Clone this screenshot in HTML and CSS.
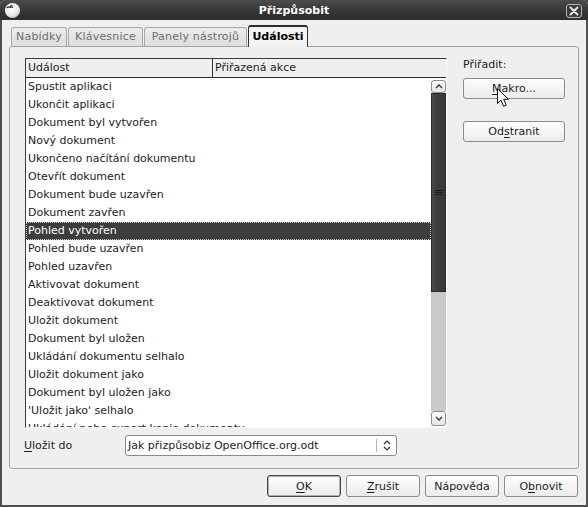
FILE: index.html
```html
<!DOCTYPE html>
<html lang="cs">
<head>
<meta charset="utf-8">
<title>Přizpůsobit</title>
<link rel="stylesheet" href="styles.css">
</head>
<body>
<div class="window">
  <div class="titlebar">
    <span class="app-icon">
      <svg width="17" height="17" viewBox="0 0 17 17">
        <defs>
          <radialGradient id="ball" cx="0.4" cy="0.35" r="0.7">
            <stop offset="0" stop-color="#ffffff"/>
            <stop offset="0.7" stop-color="#e8e8e8"/>
            <stop offset="1" stop-color="#b8b8b8"/>
          </radialGradient>
        </defs>
        <circle cx="8.5" cy="8.5" r="7.6" fill="url(#ball)"/>
        <path d="M3.2 5.6 Q4.6 4.2 6 5.4 Q7.3 4.2 8.6 5.2" fill="none" stroke="#2a2a2a" stroke-width="1.3" stroke-linecap="round"/>
        <path d="M6.5 3.4 Q7.3 2.7 8.1 3.3" fill="none" stroke="#2a2a2a" stroke-width="0.9" stroke-linecap="round"/>
      </svg>
    </span>
    <span class="title">Přizpůsobit</span>
    <span class="close-btn">
      <svg width="16" height="14" viewBox="0 0 16 14">
        <rect x="0.5" y="0.5" width="15" height="13" rx="2.5" fill="#3b3b3b" stroke="#b5b5b5"/>
        <path d="M4.5 3.5 L11.5 10.5 M11.5 3.5 L4.5 10.5" stroke="#e6e6e6" stroke-width="2" stroke-linecap="round"/>
      </svg>
    </span>
  </div>

  <div class="client">
    <div class="tabs">
      <div class="tab tab-menus">Nabídky</div>
      <div class="tab tab-keys">Klávesnice</div>
      <div class="tab tab-toolbars">Panely nástrojů</div>
      <div class="tab tab-active">Události</div>
    </div>

    <div class="panel">
      <div class="panel-main">
        <div class="listbox">
          <div class="list-header">
            <div class="col col-event">Událost</div>
            <div class="col col-action">Přiřazená akce</div>
          </div>
          <div class="list-body">
            <div class="rows">
              <div class="row">Spustit aplikaci</div>
              <div class="row">Ukončit aplikaci</div>
              <div class="row">Dokument byl vytvořen</div>
              <div class="row">Nový dokument</div>
              <div class="row">Ukončeno načítání dokumentu</div>
              <div class="row">Otevřít dokument</div>
              <div class="row">Dokument bude uzavřen</div>
              <div class="row">Dokument zavřen</div>
              <div class="row row-selected">Pohled vytvořen</div>
              <div class="row">Pohled bude uzavřen</div>
              <div class="row">Pohled uzavřen</div>
              <div class="row">Aktivovat dokument</div>
              <div class="row">Deaktivovat dokument</div>
              <div class="row">Uložit dokument</div>
              <div class="row">Dokument byl uložen</div>
              <div class="row">Ukládání dokumentu selhalo</div>
              <div class="row">Uložit dokument jako</div>
              <div class="row">Dokument byl uložen jako</div>
              <div class="row">'Uložit jako' selhalo</div>
              <div class="row">Ukládání nebo export kopie dokumentu</div>
            </div>
            <div class="scrollbar">
              <div class="sb-btn sb-up">
                <svg width="8" height="5" viewBox="0 0 8 5"><path d="M1 4 L4 1 L7 4" fill="none" stroke="#333" stroke-width="1.3"/></svg>
              </div>
              <div class="sb-thumb">
                <svg width="8" height="7" viewBox="0 0 8 7">
                  <path d="M0 1.5 H8 M0 3.5 H8 M0 5.5 H8" stroke="#1e1e1e" stroke-width="1"/>
                </svg>
              </div>
              <div class="sb-track"></div>
              <div class="sb-btn sb-down">
                <svg width="8" height="5" viewBox="0 0 8 5"><path d="M1 1 L4 4 L7 1" fill="none" stroke="#333" stroke-width="1.3"/></svg>
              </div>
            </div>
          </div>
        </div>

        <div class="side">
          <div class="side-label">Přiřadit:</div>
          <div class="btn side-btn"><span><u>M</u>akro...</span></div>
          <div class="btn side-btn side-btn-second"><span>Od<u>s</u>tranit</span></div>
          <svg class="cursor" width="14" height="20" viewBox="0 0 14 20">
            <path d="M0.5 0.5 L0.5 15.5 L4 12.2 L6.6 18.3 L9.2 17.2 L6.7 11.3 L11.4 11.3 Z" fill="#ffffff" stroke="#111" stroke-width="1" stroke-linejoin="round"/>
          </svg>
        </div>
      </div>

      <div class="save-row">
        <div class="save-label"><u>U</u>ložit do</div>
        <div class="combo">
          <div class="combo-text">Jak přizpůsobiz OpenOffice.org.odt</div>
          <div class="combo-sep"></div>
          <div class="combo-arrows">
            <svg width="8" height="13" viewBox="0 0 8 13">
              <path d="M1 5 L4 2 L7 5 M1 8 L4 11 L7 8" fill="none" stroke="#333" stroke-width="1.2"/>
            </svg>
          </div>
        </div>
      </div>
    </div>

    <div class="buttons">
      <div class="btn dlg-btn dlg-default"><span><u>O</u>K</span></div>
      <div class="btn dlg-btn"><span><u>Z</u>rušit</span></div>
      <div class="btn dlg-btn"><span>Nápověda</span></div>
      <div class="btn dlg-btn"><span>O<u>b</u>novit</span></div>
    </div>
  </div>
</div>
</body>
</html>
```

FILE: styles.css
```css
* {
  box-sizing: border-box;
}

html, body {
  margin: 0;
  padding: 0;
}

body {
  width: 588px;
  height: 507px;
  overflow: hidden;
  background: #3a3a3a;
  font-family: "DejaVu Sans", Verdana, sans-serif;
  font-size: 11px;
  color: #1c1c1c;
}

u {
  text-decoration: underline;
  text-underline-offset: 2px;
}

.window {
  width: 588px;
  height: 507px;
  display: flex;
  flex-direction: column;
  background: #efefef;
  border-radius: 5px 5px 0 0;
  overflow: hidden;
}

/* ---------- title bar ---------- */
.titlebar {
  flex: none;
  height: 20px;
  display: grid;
  grid-template-columns: 1fr auto 1fr;
  align-items: center;
  background: linear-gradient(#4c4c4c, #363636 55%, #2d2d2d);
  color: #ffffff;
}

.app-icon {
  justify-self: start;
  display: flex;
  padding-left: 4px;
  padding-top: 1px;
}

.title {
  font-weight: bold;
  font-size: 11px;
  padding-top: 1px;
}

.close-btn {
  justify-self: end;
  display: flex;
  margin-right: 6px;
  margin-top: 1px;
}

/* ---------- client area ---------- */
.client {
  flex: 1;
  display: flex;
  flex-direction: column;
  border-left: 2px solid #505050;
  border-right: 2px solid #505050;
  border-bottom: 2px solid #505050;
  padding: 5px 7px 8px 7px;
}

/* ---------- tabs ---------- */
.tabs {
  flex: none;
  height: 21px;
  display: flex;
  align-items: flex-end;
  gap: 1px;
  margin-left: 2px;
  position: relative;
  z-index: 1;
}

.tab {
  height: 19px;
  line-height: 18px;
  padding: 0;
  text-align: center;
  border: 1px solid #a9a9a9;
  border-bottom: none;
  border-radius: 3px 3px 0 0;
  background: linear-gradient(#ececec, #dedede);
  color: #6e6e6e;
  white-space: nowrap;
  letter-spacing: 0.2px;
}

.tab-menus {
  width: 56px;
}

.tab-keys {
  width: 75px;
}

.tab-toolbars {
  width: 103px;
}

.tab-active {
  width: 60px;
  height: 22px;
  margin-bottom: -1px;
  line-height: 20px;
  border: 1px solid #2e2e2e;
  border-bottom: none;
  border-top-width: 2px;
  background: #f4f4f4;
  color: #000000;
  font-weight: bold;
  letter-spacing: 0;
}

/* ---------- panel ---------- */
.panel {
  flex: none;
  height: 423px;
  display: flex;
  flex-direction: column;
  border: 1px solid #a4a4a4;
  border-radius: 3px;
  background: #efefef;
  padding: 11px 12px 12px 15px;
}

.panel-main {
  flex: none;
  height: 370px;
  display: flex;
  gap: 15px;
}

/* ---------- list box ---------- */
.listbox {
  width: 422px;
  height: 370px;
  display: flex;
  flex-direction: column;
  border: 1px solid;
  border-color: #3a3a3a #fafafa #fafafa #3a3a3a;
}

.list-header {
  flex: none;
  height: 19px;
  display: flex;
  background: #efefef;
  border-bottom: 1px solid #2e2e2e;
}

.col {
  line-height: 18px;
  padding-left: 2px;
  white-space: nowrap;
}

.col-event {
  width: 187px;
  border-right: 1px solid #2e2e2e;
}

.col-action {
  flex: 1;
}

.list-body {
  flex: 1;
  display: flex;
  min-height: 0;
}

.rows {
  flex: 1;
  background: #ffffff;
  overflow: hidden;
}

.row {
  height: 18px;
  line-height: 18px;
  padding-left: 2px;
  white-space: nowrap;
  color: #1c1c1c;
}

.row-selected {
  background: #3d3d3d;
  color: #ffffff;
  outline: 1px dotted #c8c8c8;
  outline-offset: -1px;
}

/* ---------- scrollbar ---------- */
.scrollbar {
  width: 15px;
  display: flex;
  flex-direction: column;
  background: #ffffff;
}

.sb-btn {
  flex: none;
  display: flex;
  align-items: center;
  justify-content: center;
  background: linear-gradient(#fbfbfb, #e6e6e6);
  border: 1px solid #8e8e8e;
  border-radius: 3px;
}

.sb-up {
  height: 13px;
  margin-top: 2px;
}

.sb-down {
  height: 15px;
  margin-bottom: 1px;
}

.sb-thumb {
  flex: none;
  height: 199px;
  display: flex;
  align-items: center;
  justify-content: center;
  background: linear-gradient(90deg, #4a4a4a, #3c3c3c 40%, #383838);
  border: 1px solid #2b2b2b;
}

.sb-track {
  flex: 1;
  background: #c9c9c9;
}

/* ---------- side buttons ---------- */
.side {
  width: 104px;
  display: flex;
  flex-direction: column;
  position: relative;
}

.side-label {
  height: 13px;
  line-height: 13px;
  padding-left: 1px;
  white-space: nowrap;
}

.btn {
  display: flex;
  align-items: center;
  justify-content: center;
  border: 1px solid #8c8c8c;
  border-radius: 3px;
  background: linear-gradient(#fdfdfd, #ececec);
  color: #1c1c1c;
  white-space: nowrap;
}

.side-btn {
  width: 102px;
  height: 21px;
  margin-left: 1px;
  margin-top: 7px;
}

.side-btn-second {
  margin-top: 22px;
}

.cursor {
  position: absolute;
  left: 35px;
  top: 30px;
}

/* ---------- save row ---------- */
.save-row {
  flex: none;
  height: 21px;
  margin-top: 7px;
  display: flex;
  align-items: center;
}

.save-label {
  width: 101px;
  margin-left: -1px;
  white-space: nowrap;
}

.combo {
  width: 272px;
  height: 21px;
  display: flex;
  border: 1px solid #8a8a8a;
  border-radius: 3px;
  background: #ffffff;
}

.combo-text {
  width: 250px;
  line-height: 19px;
  padding-left: 2px;
  white-space: nowrap;
  overflow: hidden;
}

.combo-sep {
  width: 1px;
  margin: 3px 0;
  background: #b4b4b4;
}

.combo-arrows {
  flex: 1;
  display: flex;
  align-items: center;
  justify-content: center;
}

/* ---------- dialog buttons ---------- */
.buttons {
  flex: none;
  height: 22px;
  margin-top: 6px;
  display: flex;
  justify-content: flex-end;
  gap: 5px;
  padding-right: 1px;
}

.dlg-btn {
  width: 74px;
  height: 22px;
}

.dlg-default {
  border-color: #4a4a4a;
  box-shadow: inset 0 0 0 1px #b0b0b0;
}
```
